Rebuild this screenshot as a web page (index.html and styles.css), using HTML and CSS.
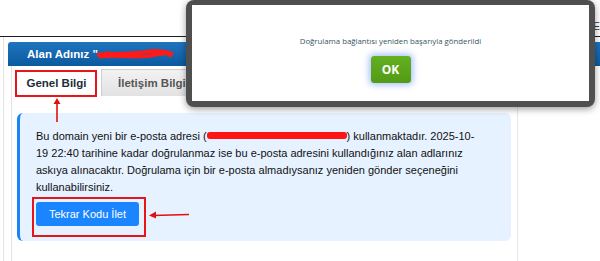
FILE: index.html
```html
<!DOCTYPE html>
<html lang="tr">
<head>
<meta charset="utf-8">
<link rel="stylesheet" href="styles.css">
</head>
<body>
<div class="page">
  <div class="topbar"><span class="topbar-text">Ön E</span></div>
  <div class="wrap">
    <div class="head">Alan Adınız "<span class="scrib-head"><svg width="80" height="14" viewBox="0 0 80 14"><path d="M2 8 C15 4 30 10 45 6 S70 4 78 7 M4 10 C20 7 40 12 60 8 S75 9 76 10 M10 6 C25 9 50 3 72 5" stroke="#ff1a1a" stroke-width="3.5" fill="none"/></svg></span></div>
    <div class="panel">
      <div class="tabs">
        <div class="tab tab-active">Genel Bilgi</div>
        <div class="tab">İletişim Bilgileri</div>
      </div>
      <div class="info">
        <p class="msg">Bu domain yeni bir e-posta adresi (<span class="redact"></span>) kullanmaktadır. 2025-10-19 22:40 tarihine kadar doğrulanmaz ise bu e-posta adresini kullandığınız alan adlarınız askıya alınacaktır. Doğrulama için bir e-posta almadıysanız yeniden gönder seçeneğini kullanabilirsiniz.</p>
        <button class="resend">Tekrar Kodu İlet</button>
      </div>
    </div>
  </div>

  <div class="mark mark-tab"></div>
  <div class="mark mark-btn"></div>
  <svg class="arrow arrow-up" width="12" height="26" viewBox="0 0 12 26"><path d="M6 25 L6 4" stroke="#e01010" stroke-width="1.6"/><path d="M2.5 7 L6 1 L9.5 7 Z" fill="#e01010"/></svg>
  <svg class="arrow arrow-left" width="42" height="12" viewBox="0 0 42 12"><path d="M41 5.5 L5 6.5" stroke="#e01010" stroke-width="1.6"/><path d="M8 2.5 L1 6.5 L8 9.5 Z" fill="#e01010"/></svg>

  <div class="modal">
    <div class="modal-inner">
      <p class="modal-text">Doğrulama bağlantısı yeniden başarıyla gönderildi</p>
      <button class="ok">OK</button>
    </div>
  </div>
</div>
</body>
</html>
```
FILE: styles.css
```css
* { box-sizing: border-box; }
html, body { margin: 0; padding: 0; background: #fff; }
body { font-family: "Liberation Sans", Arial, sans-serif; color: #111; }
.page { position: relative; width: 600px; height: 261px; overflow: hidden; }

.topbar { height: 37px; border-bottom: 1px solid #1e1e1e; display: flex; justify-content: flex-end; align-items: flex-end; padding-bottom: 4px; }
.topbar-text { font-size: 10px; color: #333; }

.wrap { margin-left: 3px; border-left: 1px solid #e3e3e3; padding: 5px 0 0 4px; height: 224px; }

.head { height: 24px; background: linear-gradient(#1f74bf, #0b5a9f); color: #fff; font-weight: bold; font-size: 11.5px; display: flex; align-items: center; padding-left: 19px; border-radius: 3px 0 0 0; }
.scrib-head { display: inline-block; width: 80px; height: 14px; margin-left: -3px; }
.scrib-head svg { display: block; }

.panel { margin-left: 3px; width: 507px; height: 200px; border-left: 1px solid #e3e3e3; border-right: 1px solid #e8e8e8; padding: 3px 0 0 4px; }

.tabs { display: flex; gap: 4px; height: 27px; }
.tab { height: 27px; padding: 0 16px; display: flex; align-items: center; font-size: 11.5px; font-weight: bold; color: #555; white-space: nowrap; background: linear-gradient(#f2f2f2, #e2e2e2); border: 1px solid #cfcfcf; border-bottom: none; }
.tab-active { width: 81px; padding: 0; justify-content: center; background: #fff; color: #1f2d3a; border-color: #fff; }

.info { margin-top: 17px; margin-left: 1px; width: 494px; height: 128px; background: #e6f2ff; border-left: 3px solid #1a84f5; border-radius: 6px; padding: 15px 35px 0 16px; }
.msg { margin: 0; font-size: 11px; line-height: 17px; color: #111; }
.redact { display: inline-block; width: 140px; height: 7px; background: #ff1414; vertical-align: 1px; border-radius: 3px; }
.resend { margin-top: 6px; width: 103px; height: 24px; border: none; border-radius: 3px; background: #1a85ff; color: #fff; font-family: "Liberation Sans", Arial, sans-serif; font-size: 11px; padding: 0; }

.mark { position: absolute; border: 2px solid #e8141c; }
.mark-tab { left: 15px; top: 70px; width: 82px; height: 27px; }
.mark-btn { left: 32px; top: 197px; width: 114px; height: 40px; }
.arrow { position: absolute; }
.arrow-up { left: 51px; top: 97px; }
.arrow-left { left: 148px; top: 209px; }

.modal { position: absolute; left: 186px; top: 0; width: 409px; height: 107px; background: #4f4f4f; border-radius: 8px; padding: 5px 6px 6px 6px; box-shadow: 0 2px 7px rgba(0,0,0,0.4); }
.modal-inner { background: #fff; height: 100%; display: flex; flex-direction: column; align-items: center; padding-top: 31px; }
.modal-text { margin: 0; font-family: "Open Sans", sans-serif; font-size: 7.8px; color: #3a5563; }
.ok { margin-top: 10px; width: 40px; height: 27px; border: none; border-radius: 3px; background: linear-gradient(#63b021, #539a15); color: #fff; font-family: "Open Sans", sans-serif; font-weight: bold; font-size: 12px; padding: 0; box-shadow: 0 0 6px 2px rgba(110,150,255,0.6); }
```
